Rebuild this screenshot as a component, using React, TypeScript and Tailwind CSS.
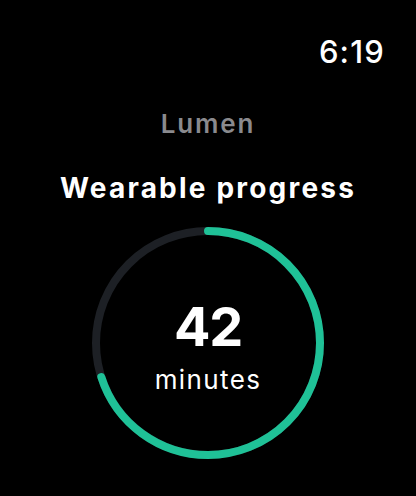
import React from "react";

const GOAL = 60;
const DONE = 42;

function ProgressRing({ value, max }: { value: number; max: number }) {
  const r = 112;
  const c = 2 * Math.PI * r;
  const pct = value / max;
  return (
    <div className="relative h-[232px] w-[232px]">
      <svg width="232" height="232" viewBox="0 0 232 232" className="-rotate-90">
        <circle cx="116" cy="116" r={r} fill="none" stroke="#1d2025" strokeWidth="8" />
        <circle
          cx="116"
          cy="116"
          r={r}
          fill="none"
          stroke="#1fc197"
          strokeWidth="8"
          strokeLinecap="round"
          strokeDasharray={`${c * pct} ${c}`}
        />
      </svg>
      <div className="absolute inset-0 flex flex-col items-center justify-center pt-[6px]">
        <span className="text-[54px] font-bold leading-none tracking-tight text-white">{value}</span>
        <span className="mt-[13px] text-[26px] leading-none tracking-[1.4px] text-white">minutes</span>
      </div>
    </div>
  );
}

export default function App() {
  return (
    <div className="flex h-[496px] w-[416px] flex-col bg-black font-['Inter',sans-serif] text-white">
      <div className="flex justify-end pr-[31px] pt-[36px]">
        <span className="text-[31px] font-medium leading-none tracking-[1.2px]">6:19</span>
      </div>
      <div className="mt-[44px] text-center text-[26px] font-semibold leading-none tracking-[1.8px] text-[#8a8a8e]">
        Lumen
      </div>
      <div className="mt-[37px] text-center text-[28px] font-bold leading-none tracking-[2.2px]">Wearable progress</div>
      <div className="mt-[25px] flex justify-center">
        <ProgressRing value={DONE} max={GOAL} />
      </div>
    </div>
  );
}
